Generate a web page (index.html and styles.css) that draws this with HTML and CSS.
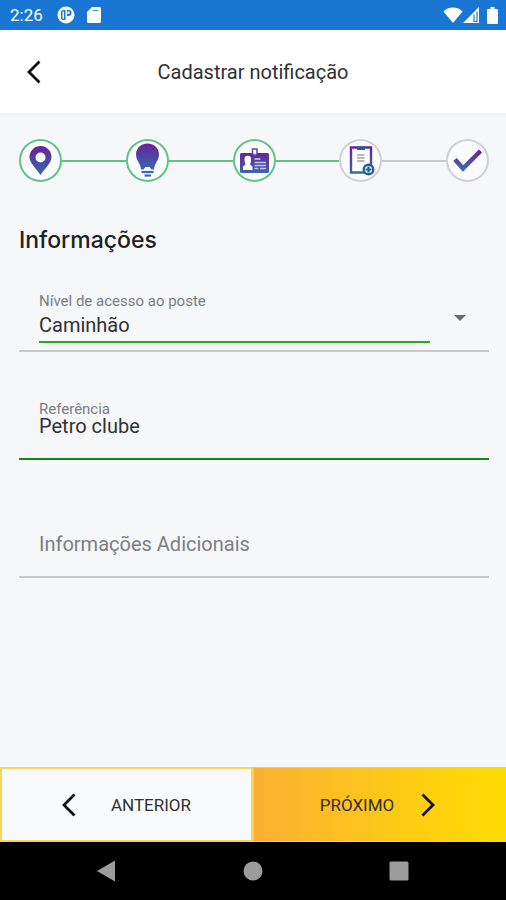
FILE: index.html
```html
<!DOCTYPE html>
<html lang="pt-BR">
<head>
  <meta charset="utf-8">
  <title>Cadastrar notificação</title>
  <meta name="viewport" content="width=device-width, initial-scale=1.0">
  <link rel="stylesheet" href="styles.css">
</head>
<body>
  <div class="status-bar">
    <span class="clock">2:26</span>
    <svg class="status-app" width="18" height="18" viewBox="0 0 18 18">
      <circle cx="9" cy="9" r="8.5" fill="#fff"/>
      <path d="M8.500 4v10H6.500A2.500 2.500 0 0 1 4 11.500v-5A2.500 2.500 0 0 1 6.500 4zM10 4h1.500a3 3 0 0 1 0 6H10z" fill="#1976d2"/>
      <path d="M5.500 5.500H7v7H5.500zM10.500 5.500h2V8h-2z" fill="#fff"/>
    </svg>
    <svg class="status-card" width="14" height="16" viewBox="0 0 14 16">
      <path d="M5 0h7.500A1.500 1.500 0 0 1 14 1.500v13a1.500 1.500 0 0 1-1.500 1.500h-11A1.500 1.500 0 0 1 0 14.500V5z" fill="#fff"/>
      <path d="M5.500 3.500h6" stroke="#1976d2" stroke-width="1.500" opacity=".7"/>
    </svg>
    <svg class="status-wifi" width="20" height="16" viewBox="0 0 20 16">
      <path d="M10 16L.5 4.500C3 2 6 .5 10 .5S17 2 19.500 4.500z" fill="#fff"/>
    </svg>
    <svg width="16" height="16" viewBox="0 0 16 16">
      <path d="M16 0v16H0z" fill="#fff"/>
      <path d="M11 7.500v7h3v-10" fill="none" stroke="#1976d2" stroke-width="1.200"/>
    </svg>
    <svg class="status-battery" width="11" height="17" viewBox="0 0 11 17">
      <path d="M3.500 0h4v2H10a1 1 0 0 1 1 1v13a1 1 0 0 1-1 1H1a1 1 0 0 1-1-1V3a1 1 0 0 1 1-1h2.500z" fill="#fff"/>
    </svg>
  </div>

  <header class="app-header">
    <button class="back-button" type="button" aria-label="Voltar">
      <svg width="14" height="24" viewBox="0 0 14 24">
        <path d="M12.500 1.500L2 12l10.500 10.500" fill="none" stroke="#111" stroke-width="2.800"/>
      </svg>
    </button>
    <h1>Cadastrar notificação</h1>
  </header>

  <main>
    <svg width="0" height="0" class="defs">
      <defs>
        <linearGradient id="purple" x1="0" y1="0" x2="0" y2="1">
          <stop offset="0" stop-color="#6a2199"/>
          <stop offset="1" stop-color="#3568ad"/>
        </linearGradient>
      </defs>
    </svg>

    <div class="steps">
      <span class="step done">
        <svg width="43" height="43" viewBox="0 0 43 43">
          <path d="M21.500 36C17 29.500 10.500 24 10.500 18a11 11 0 0 1 22 0c0 6-6.500 11.500-11 18zM21.500 13.500a5 5 0 1 0 0 10 5 5 0 0 0 0-10z" fill="url(#purple)" fill-rule="evenodd"/>
        </svg>
      </span>
      <span class="line done"></span>
      <span class="step done">
        <svg width="43" height="43" viewBox="0 0 43 43">
          <path d="M21.500 4.500c7 0 11.500 5 11.500 11 0 6-4.500 8.500-5 15h-2.500l-2-2.500h-4l-2 2.500H15c-.5-6.500-5-9-5-15 0-6 4.500-11 11.500-11z" fill="url(#purple)"/>
          <path d="M15.500 33h12" stroke="#3a68a8" stroke-width="2.200"/>
          <path d="M18.500 36.500h6.500" stroke="#3a68a8" stroke-width="2.200"/>
        </svg>
      </span>
      <span class="line done"></span>
      <span class="step done">
        <svg width="43" height="43" viewBox="0 0 43 43">
          <path d="M8.500 14h26a1.500 1.500 0 0 1 1.500 1.500v17a1.500 1.500 0 0 1-1.500 1.500h-26A1.500 1.500 0 0 1 7 32.500v-17A1.500 1.500 0 0 1 8.500 14z" fill="url(#purple)"/>
          <path d="M19.500 10h4.500v5l-2.200 1.500-2.300-1.500z" fill="#fff" stroke="#66479f" stroke-width="1.500"/>
          <path d="M11.500 20a3.300 3.300 0 0 1 6.600 0c0 3-.6 4-1.100 5.500l2.500 2V31H10v-3.500l2.500-2c-.5-1.500-1-3-1-5.500z" fill="#fff"/>
          <path d="M21.500 20h6" stroke="#d9cce9" stroke-width="1.500"/>
          <path d="M21.500 23.500H33M21.500 26.500H33M21.500 29.500h4M27 29.500h6" stroke="#c0c4e2" stroke-width="1.500"/>
        </svg>
      </span>
      <span class="line done"></span>
      <span class="step">
        <svg width="43" height="43" viewBox="0 0 43 43">
          <path d="M12 8.500h20v25H12z" fill="#fff" stroke="url(#purple)" stroke-width="2.400"/>
          <path d="M18 7.500h8V11h-8z" fill="#235f8c"/>
          <path d="M18 16h7.500M18 19h7.500M18 22h7.500" stroke="#a69ca9" stroke-width="1.400"/>
          <circle cx="29.500" cy="30.500" r="4.800" fill="#fff" stroke="#22648c" stroke-width="2.400"/>
          <path d="M29.500 27.500v6M26.500 30.500h6" stroke="#22648c" stroke-width="2.200"/>
        </svg>
      </span>
      <span class="line"></span>
      <span class="step">
        <svg width="43" height="43" viewBox="0 0 43 43">
          <path d="M9 20.500l8 9L34.500 12" fill="none" stroke="url(#purple)" stroke-width="4.500"/>
        </svg>
      </span>
    </div>

    <h2>Informações</h2>

    <form id="infoForm">
      <div class="field field-select">
        <div class="select-box">
          <label for="nivel">Nível de acesso ao poste</label>
          <select id="nivel">
            <option>Caminhão</option>
          </select>
        </div>
        <svg class="caret" width="12" height="6" viewBox="0 0 12 6">
          <path d="M0 0h12L6 6z" fill="#6b6c6e"/>
        </svg>
      </div>
      <div class="field field-active">
        <label for="referencia">Referência</label>
        <input type="text" id="referencia" value="Petro clube">
      </div>
      <div class="field">
        <input type="text" id="adicionais" placeholder="Informações Adicionais" aria-label="Informações Adicionais">
      </div>
    </form>
  </main>

  <div class="actions">
    <button type="button" class="prev-button">
      <svg width="14" height="24" viewBox="0 0 14 24">
        <path d="M12.500 1.500L2 12l10.500 10.500" fill="none" stroke="#111" stroke-width="2.800"/>
      </svg>
      ANTERIOR
    </button>
    <button type="submit" form="infoForm" class="next-button">
      PRÓXIMO
      <svg width="14" height="24" viewBox="0 0 14 24">
        <path d="M1.500 1.500L12 12 1.500 22.500" fill="none" stroke="#111" stroke-width="2.800"/>
      </svg>
    </button>
  </div>

  <nav class="nav-bar">
    <button type="button" aria-label="Voltar">
      <svg width="20" height="22" viewBox="0 0 20 22"><path d="M0 11L18 .5v21z" fill="#9c9c9c"/></svg>
    </button>
    <button type="button" aria-label="Início">
      <svg width="20" height="20" viewBox="0 0 20 20"><circle cx="10" cy="10" r="9.500" fill="#9c9c9c"/></svg>
    </button>
    <button type="button" aria-label="Recentes">
      <svg width="20" height="20" viewBox="0 0 20 20"><rect x=".5" y=".5" width="19" height="19" rx="1.500" fill="#9c9c9c"/></svg>
    </button>
  </nav>
</body>
</html>
```
FILE: styles.css
```css
* {
  box-sizing: border-box;
}

body {
  margin: 0;
  min-height: 100vh;
  display: flex;
  flex-direction: column;
  font-family: Roboto, "Liberation Sans", sans-serif;
  color: #303133;
  background-color: #f5f7f9;
}

button {
  font-family: inherit;
  color: inherit;
  border: none;
  padding: 0;
  background: none;
  cursor: pointer;
}

svg {
  display: block;
  flex-shrink: 0;
}

/* Status bar */
.status-bar {
  display: flex;
  align-items: center;
  height: 30px;
  padding: 0 8px 0 10px;
  background-color: #1976d2;
  color: #fff;
}

.clock {
  font-size: 17px;
}

.status-app {
  margin-left: 14px;
}

.status-card {
  margin-left: 12px;
}

.status-wifi {
  margin-left: auto;
}

.status-battery {
  margin-left: 8px;
}

/* Header */
.app-header {
  display: grid;
  grid-template-columns: 48px 1fr 48px;
  align-items: center;
  height: 86px;
  padding: 0 10px;
  background-color: #fff;
  border-bottom: 3px solid #eff1f3;
}

.back-button {
  display: flex;
  align-items: center;
  justify-content: center;
  height: 48px;
}

.app-header h1 {
  margin: 0;
  font-size: 20px;
  font-weight: 400;
  text-align: center;
}

main {
  flex: 1;
  padding: 23px 17px 24px 19px;
}

.defs {
  position: absolute;
}

/* Steps */
.steps {
  display: flex;
  align-items: center;
}

.step {
  width: 43px;
  height: 43px;
  border-radius: 50%;
  background-color: #fafbfc;
  box-shadow: inset 0 0 0 2px #cfd0d1;
}

.step.done {
  box-shadow: inset 0 0 0 2px #62c18b;
}

.line {
  flex: 1;
  height: 2px;
  background-color: #c9cacb;
}

.line.done {
  background-color: #62c18b;
}

h2 {
  margin: 44px 0 0;
  font-family: Inter, "Open Sans", sans-serif;
  font-size: 23px;
  font-weight: 500;
  line-height: 28px;
  color: #1f2022;
}

/* Form */
.field {
  margin-top: 48px;
  padding: 0 20px 20px;
  border-bottom: 2px solid #c8c9cb;
}

.field label {
  display: block;
  font-size: 15px;
  line-height: 16px;
  color: #7c7e81;
}

.field input,
.field select {
  display: block;
  width: 100%;
  height: 24px;
  padding: 0;
  border: none;
  outline: none;
  appearance: none;
  background: none;
  font-family: inherit;
  font-size: 20px;
  color: inherit;
}

.field input::placeholder {
  color: #7c7e81;
  opacity: 1;
}

.field-select {
  display: flex;
  align-items: center;
  gap: 24px;
  margin-top: 39px;
  padding: 0 23px 7px 20px;
}

.select-box {
  flex: 1;
  border-bottom: 2px solid #25a92b;
}

.field .select-box select {
  height: 32px;
}

.field-active {
  margin-top: 49px;
  border-bottom-color: #17851d;
}

.field-active input {
  margin-top: -3px;
}

.field-active + .field {
  margin-top: 72px;
}

/* Bottom buttons */
.actions {
  display: grid;
  grid-template-columns: 1fr 1fr;
  height: 75px;
}

.actions button {
  display: flex;
  align-items: center;
  justify-content: center;
  font-size: 17px;
}

.prev-button {
  gap: 35px;
  border: 2px solid #fbd45a;
  background-color: #f9fafb;
}

.next-button {
  gap: 27px;
  padding-right: 4px;
  border: 1px solid #fcd23c;
  background: linear-gradient(to right, #fbb034, #ffdd00);
}

.nav-bar {
  display: flex;
  align-items: center;
  justify-content: space-around;
  height: 58px;
  padding: 0 34px;
  background-color: #000;
}
```
